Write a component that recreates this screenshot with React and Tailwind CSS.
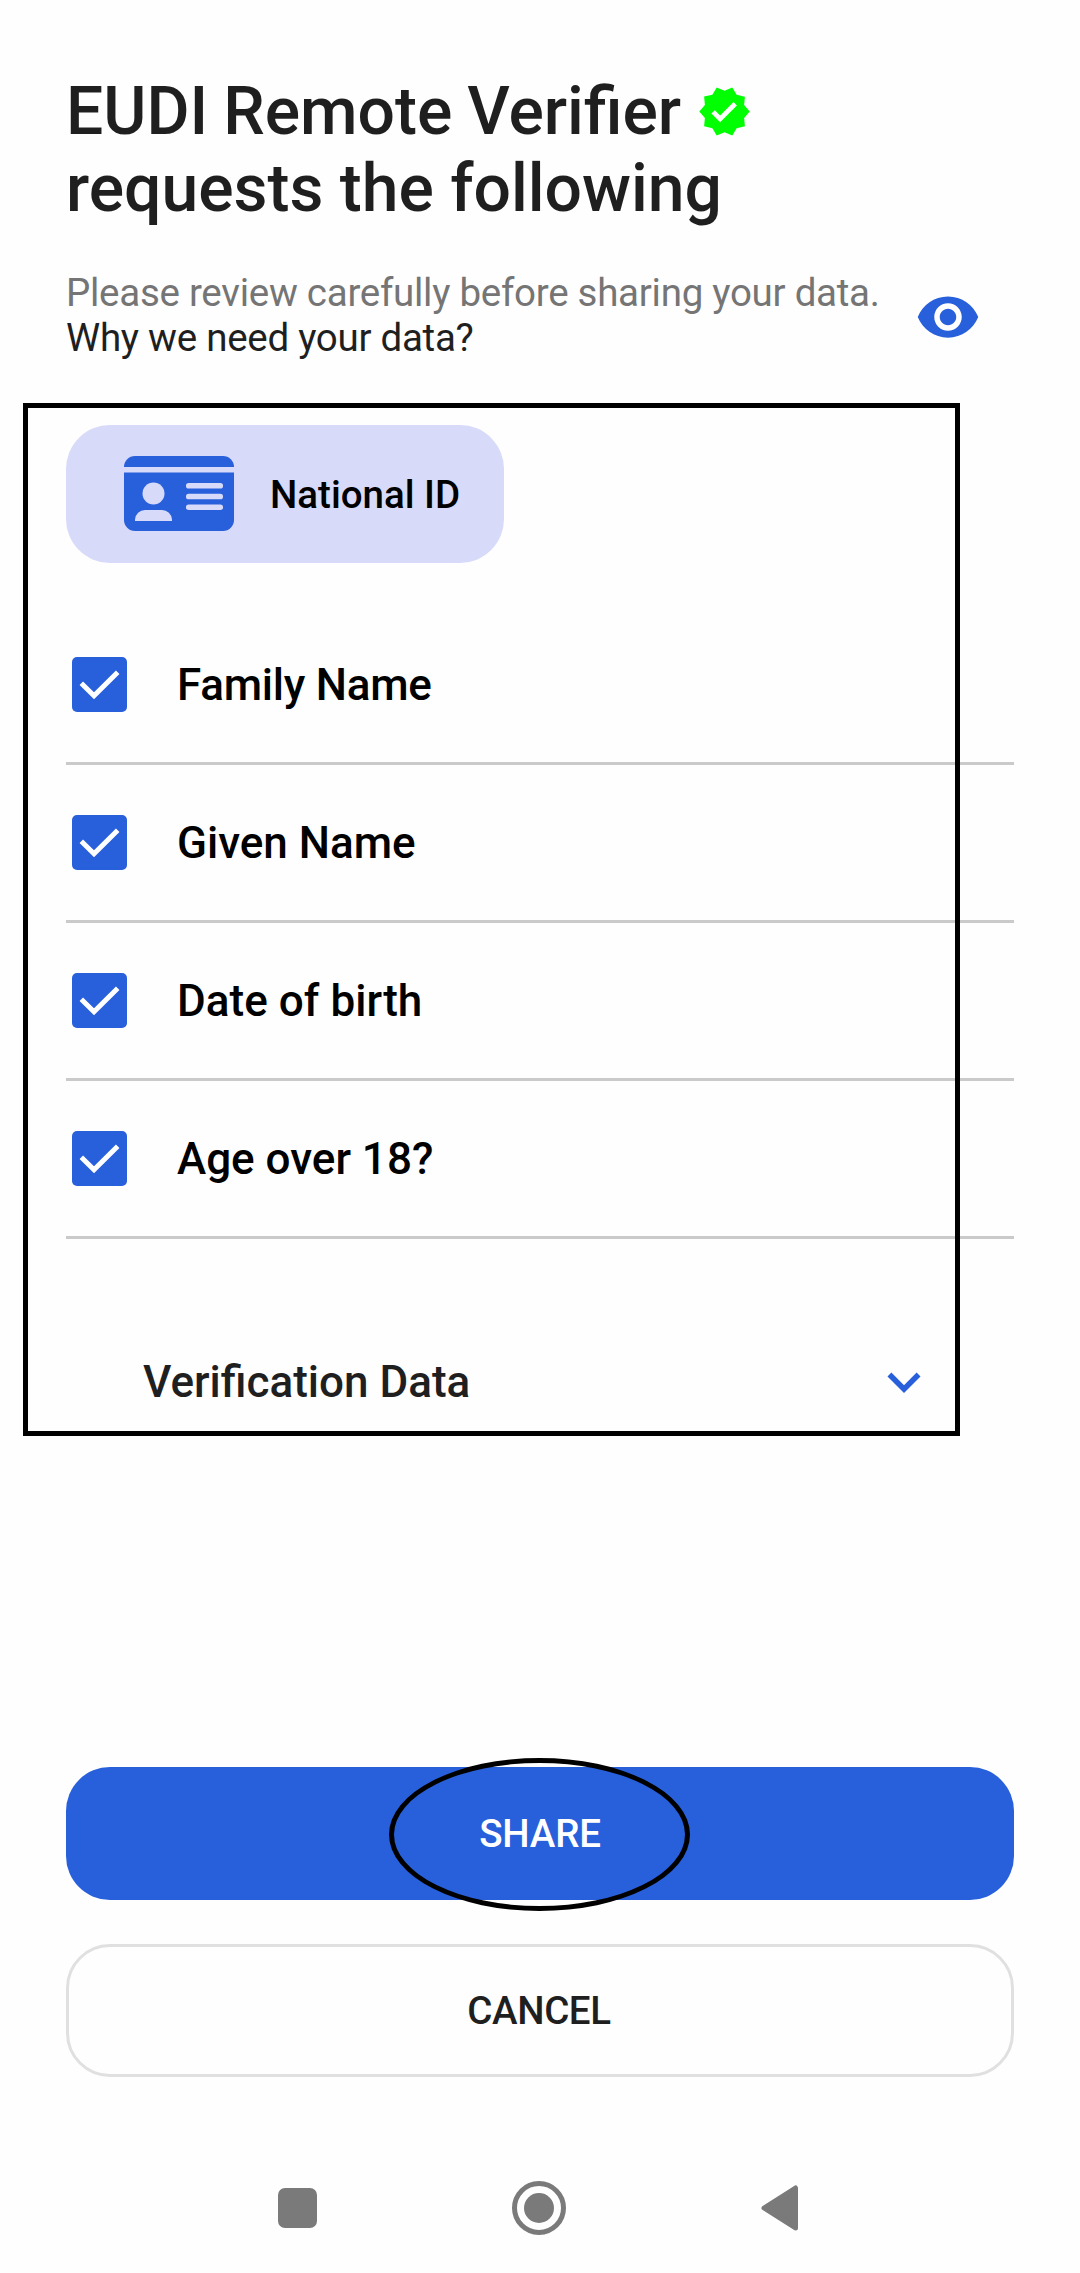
import React from "react";
import { MdVerified, MdVisibility, MdExpandMore } from "react-icons/md";

const FIELDS = [
  { label: "Family Name", tracking: "tracking-[-0.25px]" },
  { label: "Given Name", tracking: "tracking-normal" },
  { label: "Date of birth", tracking: "tracking-[0.05px]" },
  { label: "Age over 18?", tracking: "tracking-normal" },
];

function Checkbox() {
  return (
    <span className="flex h-[55px] w-[55px] shrink-0 rounded-[5px] bg-[#285fdb]">
      <svg viewBox="0 0 55 55" className="h-full w-full" fill="none">
        <path d="M9.3 26.3 L22 38.7 L45.7 15.2" stroke="#fff" strokeWidth="5" />
      </svg>
    </span>
  );
}

function IdCardIcon() {
  return (
    <svg viewBox="0 0 110 75" className="relative -top-px h-[75px] w-[110px] shrink-0">
      <path d="M0 11 A11 11 0 0 1 11 0 H99 A11 11 0 0 1 110 11 Z" fill="#285fdb" />
      <path d="M0 16.5 H110 V64 A11 11 0 0 1 99 75 H11 A11 11 0 0 1 0 64 Z" fill="#285fdb" />
      <g fill="#d7daf9">
        <circle cx="29.5" cy="37.5" r="11" />
        <path d="M11 65 V63.5 A10 10 0 0 1 21 54 H38 A10 10 0 0 1 48 63.5 V65 Z" />
        <rect x="62" y="27" width="37" height="5.6" rx="2.6" />
        <rect x="62" y="37.7" width="37" height="5.6" rx="2.6" />
        <rect x="62" y="48.4" width="37" height="5.6" rx="2.6" />
      </g>
    </svg>
  );
}

export default function App() {
  return (
    <div className="relative flex h-[2273px] w-[1080px] flex-col overflow-hidden bg-[#fefefe] px-[66px] pt-[73px] font-['Roboto',sans-serif] text-[#1f1f1f]">
      <h1 className="text-[66px] leading-[77px] font-medium">
        <span className="flex items-center [word-spacing:-1.5px]">
          EUDI Remote Verifier
          <MdVerified className="ml-[16px] h-[55px] w-[55px] text-[#00ff00]" />
        </span>
        <span className="block">requests the following</span>
      </h1>

      <div className="mt-[43px] flex h-[90px] items-center justify-between text-[38.5px] leading-[45px] tracking-[-0.27px]">
        <div>
          <p className="whitespace-nowrap text-[#757575]">Please review carefully before sharing your data.</p>
          <p>Why we need your data?</p>
        </div>
        <MdVisibility className="mt-[3px] mr-[33px] h-[66px] w-[66px] shrink-0 text-[#285fdb]" />
      </div>

      <div className="mt-[65px] flex h-[138px] w-[438px] shrink-0 items-center rounded-[44px] bg-[#d7daf9] pl-[58px] text-[38.5px] font-medium text-black">
        <IdCardIcon />
        <span className="ml-[36px] pt-[2px] whitespace-nowrap">National ID</span>
      </div>

      <ul className="mt-[44px] shrink-0 text-[44px] font-medium text-black">
        {FIELDS.map(({ label, tracking }) => (
          <li key={label} className="flex h-[158px] items-center border-b-[3px] border-[#cacaca] pl-[6px]">
            <Checkbox />
            <span className={`ml-[50px] ${tracking}`}>{label}</span>
          </li>
        ))}
      </ul>

      <div className="mt-[110px] flex h-[66px] shrink-0 items-center justify-between pr-[77px] pl-[77px] text-[44px] font-medium">
        <span>Verification Data</span>
        <MdExpandMore className="h-[66px] w-[66px] text-[#285fdb]" />
      </div>

      <div className="mt-[352px] flex shrink-0 flex-col gap-[44px] text-[38.5px] font-medium">
        <button className="flex h-[133px] items-center justify-center rounded-[44px] bg-[#285fdb] tracking-[-0.2px] text-white">SHARE</button>
        <button className="flex h-[133px] items-center justify-center rounded-[44px] border-[3px] border-[#e0e0e0] pr-[2px] tracking-[-0.4px]">CANCEL</button>
      </div>

      <nav className="mt-[104px] flex h-[54px] shrink-0 items-center pl-[212px]">
        <span className="h-[40px] w-[39px] rounded-[7px] bg-[#7a7a7a]" />
        <span className="ml-[195px] flex h-[54px] w-[54px] items-center justify-center rounded-full border-[5px] border-[#7a7a7a]">
          <span className="h-[30px] w-[30px] rounded-full bg-[#7a7a7a]" />
        </span>
        <svg viewBox="0 0 37 46" className="ml-[195px] h-[46px] w-[37px]">
          <path d="M3 23 L34.5 3 V43 Z" fill="#7a7a7a" stroke="#7a7a7a" strokeWidth="5" strokeLinejoin="round" />
        </svg>
      </nav>

      {/* highlight marks drawn over the screen */}
      <div className="absolute top-[403px] left-[23px] h-[1033px] w-[937px] border-[5px] border-black" />
      <div className="absolute top-[1758px] left-[389px] h-[153px] w-[301px] rounded-[50%] border-[5px] border-black" />
    </div>
  );
}
